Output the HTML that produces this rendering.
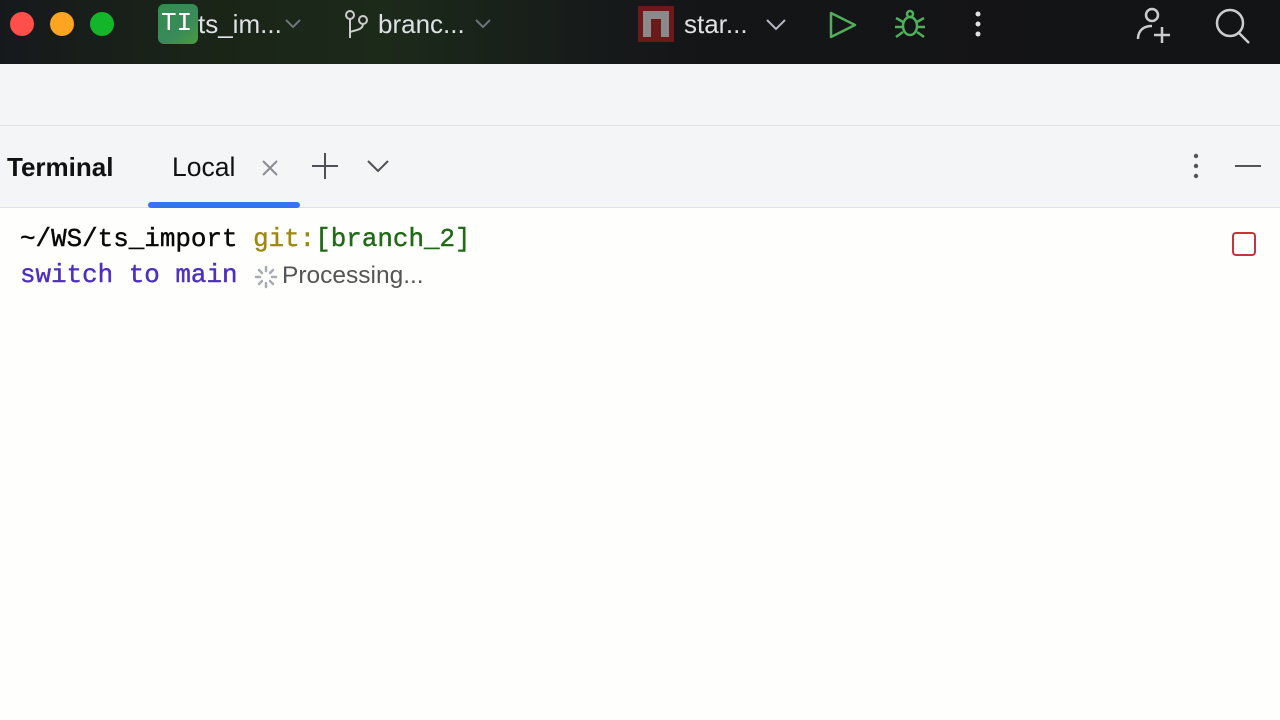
<!DOCTYPE html>
<html><head><meta charset="utf-8"><style>
*{margin:0;padding:0;box-sizing:border-box}
body{width:1280px;height:720px;overflow:hidden;background:#fefefd;font-family:"Liberation Sans",sans-serif;position:relative}
.top{position:absolute;left:0;top:0;width:1280px;height:64px;background:linear-gradient(90deg,#16191c 0%,#1a2418 15%,#1c2a1a 30%,#16191a 48%,#141517 55%,#131416 100%)}
.dot{position:absolute;top:12px;width:24px;height:24px;border-radius:50%}
.t{position:absolute;color:#dfe1e5;font-size:26px}
.bar2{position:absolute;top:64px;left:0;width:1280px;height:62px;background:#f3f5f6;border-bottom:1px solid #dde0e6}
.tabs{position:absolute;top:126px;left:0;width:1280px;height:82px;background:#f3f5f6;border-bottom:1px solid #dde0e6}
.mono{position:absolute;font-family:"Liberation Mono",monospace;font-size:25.9px;white-space:pre;-webkit-text-stroke:0.4px currentColor}
</style></head><body>
<div class="top">
<div class="dot" style="left:10px;background:#fe4f4a"></div>
<div class="dot" style="left:50px;background:#fda520"></div>
<div class="dot" style="left:90px;background:#15b52b"></div>
<div style="position:absolute;left:158px;top:4px;width:40px;height:40px;border-radius:6px;background:linear-gradient(135deg,#2f8f4e,#3a8a5a 60%,#4a9a3e)"></div>
<div class="t" style="left:161px;top:8px;font-family:'Liberation Mono',monospace;color:#fff;font-size:26px">TI</div>
<div class="t" style="left:198px;top:9px">ts_im...</div>
<svg style="position:absolute;left:284px;top:16px" width="18" height="14"><path d="M2 4l7 7 7-7" fill="none" stroke="#6f737a" stroke-width="2"/></svg>
<svg style="position:absolute;left:344px;top:10px" width="26" height="30" fill="none" stroke="#ccc" stroke-width="2"><circle cx="6" cy="5" r="4"/><circle cx="19" cy="10" r="4"/><path d="M6 9v19M19 14c0 6-8 6-13 8"/></svg>
<div class="t" style="left:378px;top:9px">branc...</div>
<svg style="position:absolute;left:474px;top:16px" width="18" height="14"><path d="M2 4l7 7 7-7" fill="none" stroke="#6f737a" stroke-width="2"/></svg>
<div style="position:absolute;left:638px;top:6px;width:36px;height:36px;background:#6b1a1a"></div>
<div style="position:absolute;left:643px;top:11px;width:26px;height:26px;background:#8a8a8a"></div>
<div style="position:absolute;left:651px;top:19px;width:10px;height:18px;background:#6b1a1a"></div>
<div class="t" style="left:684px;top:9px">star...</div>
<svg style="position:absolute;left:764px;top:16px" width="24" height="16"><path d="M3 4l9 9 9-9" fill="none" stroke="#b4b8bf" stroke-width="2"/></svg>
<svg style="position:absolute;left:828px;top:10px" width="30" height="30"><path d="M3 3l24 12-24 12z" fill="none" stroke="#4fb059" stroke-width="2.5" stroke-linejoin="round"/></svg>
<svg style="position:absolute;left:892px;top:8px" width="36" height="32" fill="none" stroke="#4fb059" stroke-width="2.5"><circle cx="18" cy="6" r="3"/><ellipse cx="18" cy="18" rx="7" ry="9"/><path d="M4 10l7 4M32 10l-7 4M3 19h8M33 19h-8M4 29l7-5M32 29l-7-5"/></svg>
<svg style="position:absolute;left:970px;top:10px" width="16" height="28" fill="#dfe1e5"><circle cx="8" cy="4" r="2.5"/><circle cx="8" cy="14" r="2.5"/><circle cx="8" cy="24" r="2.5"/></svg>
<svg style="position:absolute;left:1134px;top:5px" width="40" height="40" fill="none" stroke="#ccc" stroke-width="2.5"><circle cx="18" cy="10" r="6"/><path d="M4 34c0-8 5-13 14-13M28 22v16M20 30h16"/></svg>
<svg style="position:absolute;left:1212px;top:6px" width="40" height="40" fill="none" stroke="#ccc" stroke-width="2.5"><circle cx="18" cy="17" r="13"/><path d="M27 27l10 10"/></svg>
</div>
<div class="bar2"></div>
<div class="tabs">
<div style="position:absolute;left:7px;top:26px;font-size:26px;font-weight:bold;color:#111">Terminal</div>
<div style="position:absolute;left:172px;top:26px;font-size:26.5px;color:#111">Local</div>
<svg style="position:absolute;left:261px;top:33px" width="18" height="18"><path d="M2 2l14 14M16 2L2 16" stroke="#8a8d93" stroke-width="2"/></svg>
<svg style="position:absolute;left:311px;top:26px" width="28" height="28"><path d="M14 1v26M1 14h26" stroke="#4d5157" stroke-width="2"/></svg>
<svg style="position:absolute;left:366px;top:32px" width="24" height="16"><path d="M2 3l10 10 10-10" fill="none" stroke="#4d5157" stroke-width="2"/></svg>
<div style="position:absolute;left:148px;top:76px;width:152px;height:6px;border-radius:3px;background:#3574f0"></div>
<svg style="position:absolute;left:1188px;top:26px" width="16" height="28" fill="#555"><circle cx="8" cy="4" r="2.2"/><circle cx="8" cy="14" r="2.2"/><circle cx="8" cy="24" r="2.2"/></svg>
<div style="position:absolute;left:1235px;top:39px;width:26px;height:2px;background:#555"></div>
</div>
<div class="mono" style="left:20px;top:224px;color:#080808">~/WS/ts_import <span style="color:#9e880d">git:</span><span style="color:#1f6a15">[branch_2]</span></div>
<div class="mono" style="left:20px;top:260px;color:#4d2fc0">switch to main</div>
<svg style="position:absolute;left:254px;top:265px" width="24" height="24" stroke="#a8acb3" stroke-width="2.5" stroke-linecap="round"><path d="M12 2v4M12 18v4M2 12h4M18 12h4M5 5l3 3M16 16l3 3M5 19l3-3M16 8l3-3"/></svg>
<div style="position:absolute;left:282px;top:262px;font-size:24.5px;color:#555">Processing...</div>
<div style="position:absolute;left:1232px;top:232px;width:24px;height:24px;border:2px solid #c8323b;border-radius:4px"></div>
</body></html>
